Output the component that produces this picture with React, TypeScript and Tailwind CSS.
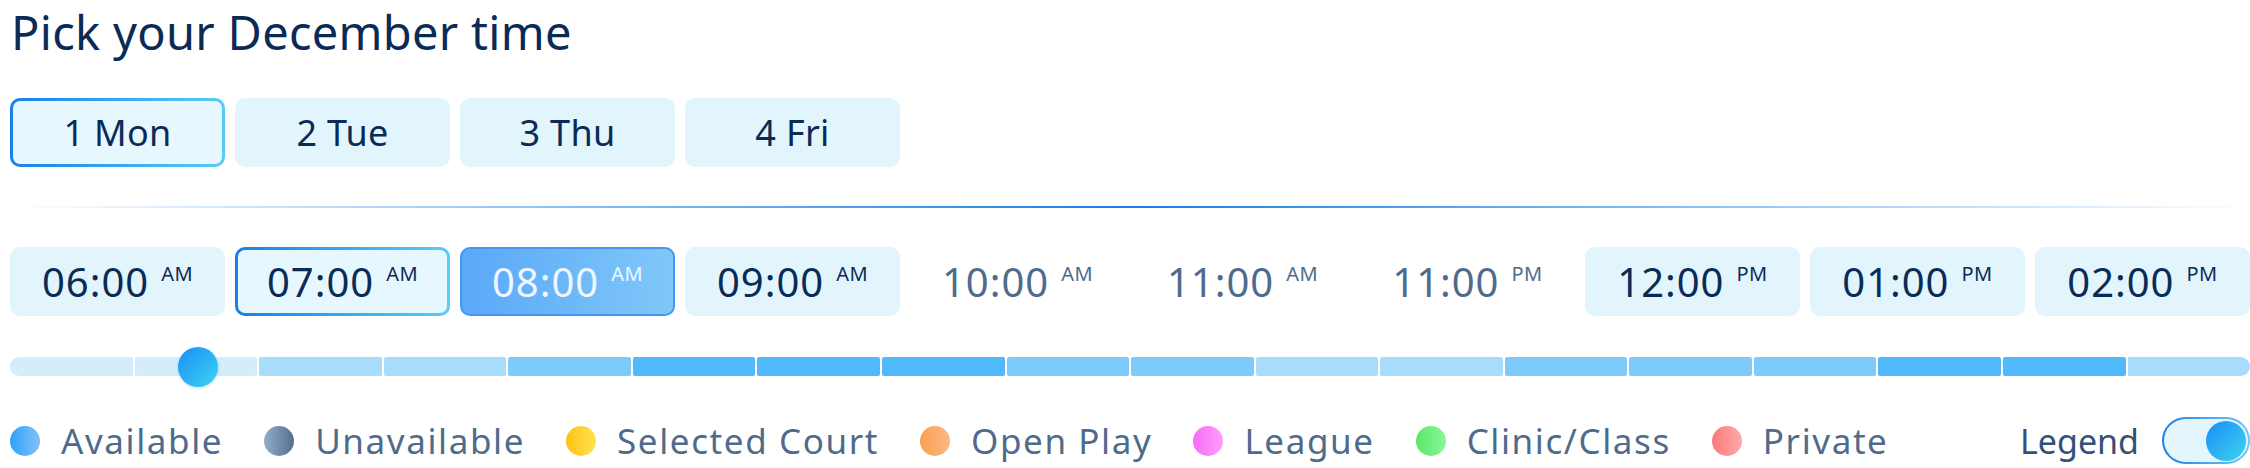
import React from "react";

const navy = "text-[#0b2b57]";

const days = [
  { label: "1 Mon", selected: true },
  { label: "2 Tue" },
  { label: "3 Thu" },
  { label: "4 Fri" },
];

type Slot = { t: string; p: string; kind: "normal" | "outlined" | "filled" | "none" };
const slots: Slot[] = [
  { t: "06:00", p: "AM", kind: "normal" },
  { t: "07:00", p: "AM", kind: "outlined" },
  { t: "08:00", p: "AM", kind: "filled" },
  { t: "09:00", p: "AM", kind: "normal" },
  { t: "10:00", p: "AM", kind: "none" },
  { t: "11:00", p: "AM", kind: "none" },
  { t: "11:00", p: "PM", kind: "none" },
  { t: "12:00", p: "PM", kind: "normal" },
  { t: "01:00", p: "PM", kind: "normal" },
  { t: "02:00", p: "PM", kind: "normal" },
];

const segColors = ["bg-[#d3edfb]", "bg-[#a8dcfb]", "bg-[#7dcbfb]", "bg-[#4fb9fc]"];
const segs = [0, 0, 1, 1, 2, 3, 3, 3, 2, 2, 1, 1, 2, 2, 2, 3, 3, 1];

const legend = [
  { label: "Available", dot: "from-[#27a2fb] to-[#80bff8]" },
  { label: "Unavailable", dot: "from-[#93aecb] to-[#55708f]" },
  { label: "Selected Court", dot: "from-[#ffc20a] to-[#ffe24f]" },
  { label: "Open Play", dot: "from-[#fba14f] to-[#fbb783]" },
  { label: "League", dot: "from-[#f86af7] to-[#fd9dfc]" },
  { label: "Clinic/Class", dot: "from-[#5be769] to-[#88f698]" },
  { label: "Private", dot: "from-[#fb7878] to-[#fcaaaa]" },
];

function TimeText({ t, p }: { t: string; p: string }) {
  return (
    <div className="flex items-start justify-center">
      <span className="text-[40px] leading-none tracking-[1px]">{t}</span>
      <span className="text-[20px] leading-none tracking-[0.5px] ml-[12px] mt-[2px]">{p}</span>
    </div>
  );
}

function SlotButton({ s }: { s: Slot }) {
  if (s.kind === "outlined") {
    return (
      <div className="h-[69px] rounded-[10px] p-[3px] bg-linear-to-r from-[#1a7fe8] to-[#5ccbf5]">
        <div className={`h-full rounded-[7px] bg-[#e6f7fd] flex items-center justify-center ${navy}`}>
          <TimeText t={s.t} p={s.p} />
        </div>
      </div>
    );
  }
  if (s.kind === "filled") {
    return (
      <div className="h-[69px] rounded-[10px] border-2 border-[#4297f0] bg-linear-to-r from-[#5aa8f8] to-[#80c7f8] flex items-center justify-center text-[#eef7ff]">
        <TimeText t={s.t} p={s.p} />
      </div>
    );
  }
  if (s.kind === "none") {
    return (
      <div className="h-[69px] rounded-[10px] flex items-center justify-center text-[#4f6b8c]">
        <TimeText t={s.t} p={s.p} />
      </div>
    );
  }
  return (
    <div className={`h-[69px] rounded-[10px] bg-[#e2f5fd] flex items-center justify-center ${navy}`}>
      <TimeText t={s.t} p={s.p} />
    </div>
  );
}

export default function App() {
  return (
    <div className="w-[2250px] h-[468px] overflow-hidden bg-white pl-[10px] font-['Noto_Sans',sans-serif]">
      <div className="w-[2240px]">
        <h1 className={`text-[47px] leading-[64px] font-normal pl-[1px] tracking-[0.3px] ${navy}`}>
          Pick your December time
        </h1>

        <div className="grid grid-cols-10 gap-[10px] mt-[34px]">
          {days.map((d) =>
            d.selected ? (
              <div key={d.label} className="h-[69px] rounded-[10px] p-[3px] bg-linear-to-r from-[#1a7fe8] to-[#5ccbf5]">
                <div className={`h-full rounded-[7px] bg-[#e6f7fd] flex items-center justify-center text-[36px] leading-none tracking-[0.3px] ${navy}`}>
                  {d.label}
                </div>
              </div>
            ) : (
              <div key={d.label} className={`h-[69px] rounded-[10px] bg-[#e2f5fd] flex items-center justify-center text-[36px] leading-none tracking-[0.3px] ${navy}`}>
                {d.label}
              </div>
            )
          )}
        </div>

        <div className="h-[2px] mt-[39px] mb-[39px] bg-linear-to-r from-transparent via-[#1580e8] to-transparent" />

        <div className="grid grid-cols-10 gap-[10px]">
          {slots.map((s, i) => (
            <SlotButton key={i} s={s} />
          ))}
        </div>

        <div className="relative mt-[41px] h-[19px] flex gap-[2px]">
          {segs.map((c, i) => (
            <div
              key={i}
              className={`flex-1 h-full ${segColors[c]} ${
                i === 0 ? "rounded-l-full rounded-r-[2px]" : i === segs.length - 1 ? "rounded-r-full rounded-l-[2px]" : "rounded-[2px]"
              }`}
            />
          ))}
          <div className="absolute left-[168px] top-1/2 -translate-y-1/2 w-[40px] h-[40px] rounded-full bg-linear-to-br from-[#1e8cf5] to-[#40d4f0] shadow-[0_1px_3px_rgba(30,120,220,0.25)]" />
        </div>

        <div className="mt-[41px] h-[47px] flex items-center justify-between">
          <div className="flex items-center gap-[41px]">
            {legend.map((l) => (
              <div key={l.label} className="flex items-center gap-[21px]">
                <span className={`w-[30px] h-[30px] rounded-full bg-linear-to-r ${l.dot}`} />
                <span className="text-[35px] leading-none tracking-[1.6px] text-[#4f6b8c]">{l.label}</span>
              </div>
            ))}
          </div>
          <div className="flex items-center gap-[23px]">
            <span className="text-[34px] leading-none text-[#34507a]">Legend</span>
            <div className="w-[88px] h-[47px] rounded-full p-[2px] bg-linear-to-r from-[#1a7fe8] to-[#6fc9f5]">
              <div className="w-full h-full rounded-full bg-[#e4f6fd] flex items-center justify-end pr-[2px]">
                <span className="w-[40px] h-[40px] rounded-full bg-linear-to-br from-[#1e8cf5] to-[#40d4f0]" />
              </div>
            </div>
          </div>
        </div>
      </div>
    </div>
  );
}
